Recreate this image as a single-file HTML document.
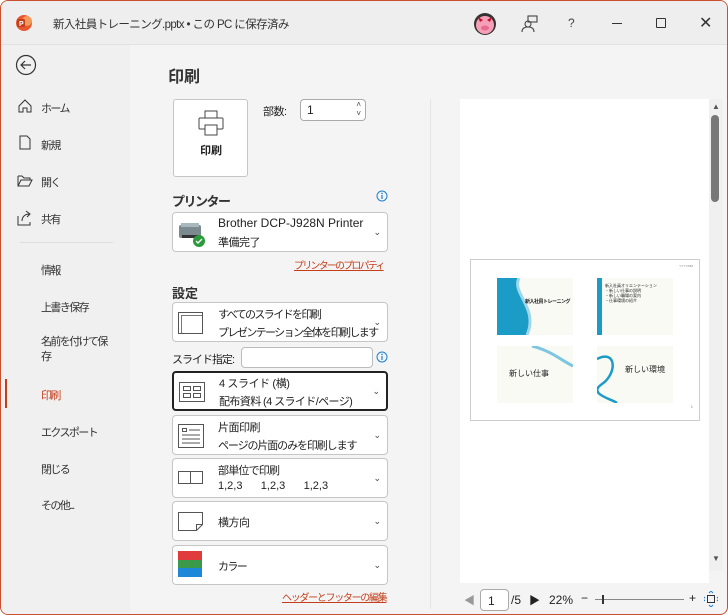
<!DOCTYPE html>
<html><head><meta charset="utf-8"><style>
*{box-sizing:border-box;margin:0;padding:0}
body{width:728px;height:615px;overflow:hidden;font-family:"Liberation Sans","Noto Sans CJK JP",sans-serif;font-size:12px;color:#222;background:#fff}
.win{position:absolute;left:0;top:0;width:728px;height:615px;border:1px solid #c8502e;border-radius:8px;overflow:hidden;background:#f4f4f4}
.title{position:absolute;left:0;top:0;width:728px;height:44px;background:#eeeeee;border-bottom:1px solid #e2e2e2}
.side{position:absolute;left:0;top:44px;width:129px;height:571px;background:#f0f0f0}
.a{position:absolute;white-space:nowrap}
.j{font-size:11px !important;letter-spacing:-1.6px}
.box{position:absolute;background:#fff;border:1px solid #c6c6c6;border-radius:4px}
.chev{position:absolute;right:6px;top:50%;margin-top:-5px;font-size:9px;color:#444}
.t1{position:absolute;left:45px;top:6px;font-size:12px;white-space:nowrap}
.t2{position:absolute;left:45px;top:24px;font-size:12px;white-space:nowrap}
.nav{position:absolute;left:40px;font-size:11px;color:#333;letter-spacing:-1.6px;white-space:nowrap}
</style></head><body><div class="win">
<div class="title">
 <svg class="a" style="left:14px;top:13px" width="18" height="18"><circle cx="9" cy="9" r="8" fill="#e8562e"/><circle cx="12" cy="7" r="5" fill="#f29a5a"/><rect x="2" y="5" width="8" height="8" rx="1.5" fill="#c43e1c"/><text x="4" y="12" font-size="7" fill="#fff" font-weight="bold" font-family="Liberation Sans">P</text></svg>
 <div class="a" style="left:52px;top:15px;font-size:11.5px;letter-spacing:-0.6px;color:#333">新入社員トレーニング.pptx • この PC に保存済み</div>
 <svg class="a" style="left:472px;top:11px" width="24" height="24"><circle cx="12" cy="12" r="11" fill="#333"/><circle cx="12" cy="13" r="9" fill="#f6a0b8"/><path d="M5 5 L10 8 L7 10Z M19 5 L14 8 L17 10Z" fill="#c0102a"/><ellipse cx="12" cy="16" rx="4" ry="2.5" fill="#e86a90"/></svg>
 <svg class="a" style="left:520px;top:14px" width="18" height="18" fill="none" stroke="#444" stroke-width="1.1"><rect x="7" y="1" width="9" height="6"/><circle cx="7" cy="9" r="3"/><path d="M1 17c0-4 3-5 6-5s6 1 6 5"/></svg>
 <div class="a" style="left:567px;top:15px;font-size:12px;color:#444">?</div>
 <div class="a" style="left:611px;top:22px;width:10px;height:1px;background:#333"></div>
 <div class="a" style="left:655px;top:17px;width:10px;height:10px;border:1px solid #333;border-radius:1px"></div>
 <div class="a" style="left:698px;top:12px;font-size:16px;color:#333">✕</div>
</div>
<div class="side">
 <svg class="a" style="left:14px;top:9px" width="22" height="22" fill="none" stroke="#333" stroke-width="1.2"><circle cx="11" cy="11" r="9.5"/><path d="M16 11H6M10 7l-4 4 4 4"/></svg>
 <svg class="a" style="left:17px;top:54px" width="14" height="14" fill="none" stroke="#333"><path d="M1 7L7 1l6 6v6H9V9H5v4H1z"/></svg>
 <div class="nav" style="top:55px">ホーム</div>
 <svg class="a" style="left:18px;top:90px" width="12" height="15" fill="none" stroke="#333"><path d="M1 1h7l3 3v10H1z"/></svg>
 <div class="nav" style="top:92px">新規</div>
 <svg class="a" style="left:16px;top:130px" width="16" height="12" fill="none" stroke="#333"><path d="M1 1h4l2 2h6v2M1 1v10h11l3-6H4l-3 6"/></svg>
 <div class="nav" style="top:129px">開く</div>
 <svg class="a" style="left:16px;top:165px" width="16" height="16" fill="none" stroke="#333"><path d="M1 6v9h12v-3M5 11c0-4 3-7 7-7M9 1l4 3-3 3"/></svg>
 <div class="nav" style="top:166px">共有</div>
 <div class="a" style="left:19px;top:197px;width:93px;height:1px;background:#ddd"></div>
 <div class="nav" style="top:217px">情報</div>
 <div class="nav" style="top:254px">上書き保存</div>
 <div class="nav" style="top:290px;line-height:15px">名前を付けて保<br>存</div>
 <div class="a" style="left:4px;top:334px;width:2px;height:29px;background:#c43e1c"></div>
 <div class="nav" style="top:342px;color:#c43e1c">印刷</div>
 <div class="nav" style="top:379px">エクスポート</div>
 <div class="nav" style="top:416px">閉じる</div>
 <div class="nav" style="top:452px">その他...</div>
</div>
<div class="a" style="left:167px;top:62px;font-size:16px;font-weight:bold;color:#333">印刷</div>
<div class="box" style="left:172px;top:98px;width:75px;height:78px;border-radius:3px">
 <svg class="a" style="left:24px;top:10px" width="26" height="26" fill="none" stroke="#444"><rect x="7" y="1" width="12" height="7"/><rect x="1" y="8" width="24" height="11" rx="1"/><rect x="7" y="15" width="12" height="10" fill="#fff"/></svg>
 <div class="a" style="left:26px;top:42px;font-size:11px;font-weight:bold">印刷</div>
</div>
<div class="a j" style="left:262px;top:102px;letter-spacing:-0.5px">部数:</div>
<div class="box" style="left:299px;top:98px;width:66px;height:22px;border-color:#aaa"><span class="a" style="left:6px;top:3px">1</span><span class="a" style="right:4px;top:0;font-size:8px;line-height:9px;color:#444">˄<br>˅</span></div>
<div class="a" style="left:171px;top:190px;font-size:13px;font-weight:bold;color:#333;letter-spacing:-1.5px">プリンター</div>
<svg class="a" style="left:375px;top:189px" width="12" height="12"><circle cx="6" cy="6" r="5" fill="none" stroke="#1e7fd0"/><rect x="5.4" y="5" width="1.2" height="4" fill="#1e7fd0"/><circle cx="6" cy="3.4" r=".8" fill="#1e7fd0"/></svg>
<div class="box" style="left:171px;top:211px;width:216px;height:40px">
 <svg class="a" style="left:4px;top:8px" width="30" height="28"><rect x="2" y="4" width="22" height="13" rx="2" fill="#7b8a8e"/><rect x="4" y="2" width="18" height="4" fill="#a9b8bc"/><rect x="5" y="14" width="16" height="3" fill="#333"/><circle cx="22" cy="20" r="6" fill="#2a9a3a"/><path d="M19 20l2 2 4-4" stroke="#fff" fill="none" stroke-width="1.4"/></svg>
 <div class="t1" style="top:3px">Brother DCP-J928N Printer</div><div class="t2 j" style="top:21px;letter-spacing:-0.5px">準備完了</div><span class="chev">⌄</span>
</div>
<div class="a" style="left:293px;top:256px;font-size:10px;letter-spacing:-1.8px;color:#c43e1c;text-decoration:underline">プリンターのプロパティ</div>
<div class="a" style="left:171px;top:282px;font-size:13px;font-weight:bold;color:#333">設定</div>
<div class="box" style="left:171px;top:301px;width:216px;height:40px">
 <div class="a" style="left:5px;top:9px;width:25px;height:22px;border:1px solid #555;box-shadow:inset 2px 2px 0 #fff,inset 3px 3px 0 #777"></div>
 <div class="t1 j" style="top:3px">すべてのスライドを印刷</div><div class="t2 j" style="top:21px">プレゼンテーション全体を印刷します</div><span class="chev">⌄</span></div>
<div class="a j" style="left:171px;top:350px;letter-spacing:-1px">スライド指定:</div>
<div class="box" style="left:240px;top:346px;width:132px;height:21px;border-color:#bbb"></div>
<svg class="a" style="left:375px;top:350px" width="12" height="12"><circle cx="6" cy="6" r="5" fill="none" stroke="#1e7fd0"/><rect x="5.4" y="5" width="1.2" height="4" fill="#1e7fd0"/><circle cx="6" cy="3.4" r=".8" fill="#1e7fd0"/></svg>
<div class="box" style="left:171px;top:370px;width:216px;height:40px;border:2px solid #222">
 <svg class="a" style="left:5px;top:9px" width="26" height="20" fill="none" stroke="#555"><rect x=".5" y=".5" width="25" height="19"/><rect x="4.5" y="4.5" width="7" height="4"/><rect x="14.5" y="4.5" width="7" height="4"/><rect x="4.5" y="11.5" width="7" height="4"/><rect x="14.5" y="11.5" width="7" height="4"/></svg>
 <div class="t1 j" style="top:2px;letter-spacing:-0.4px">4 スライド (横)</div><div class="t2 j" style="top:20px;letter-spacing:-0.6px">配布資料 (4 スライド/ページ)</div><span class="chev">⌄</span></div>
<div class="box" style="left:171px;top:414px;width:216px;height:40px">
 <svg class="a" style="left:5px;top:8px" width="26" height="24" fill="none" stroke="#555"><rect x=".5" y=".5" width="25" height="23"/><rect x="4.5" y="4.5" width="4" height="3"/><path d="M11 6h11M4 11h18M4 15h18M4 19h18"/></svg>
 <div class="t1 j" style="top:3px;letter-spacing:-0.5px">片面印刷</div><div class="t2 j" style="top:21px;letter-spacing:-1.1px">ページの片面のみを印刷します</div><span class="chev">⌄</span></div>
<div class="box" style="left:171px;top:457px;width:216px;height:40px">
 <svg class="a" style="left:5px;top:12px" width="26" height="14" fill="none" stroke="#555"><rect x=".5" y=".5" width="12" height="12"/><rect x="12.5" y=".5" width="12" height="12"/></svg>
 <div class="t1 j" style="top:3px;letter-spacing:-0.8px">部単位で印刷</div><div class="t2" style="top:21px;font-size:11px">1,2,3&nbsp;&nbsp;&nbsp;&nbsp;&nbsp;&nbsp;1,2,3&nbsp;&nbsp;&nbsp;&nbsp;&nbsp;&nbsp;1,2,3</div><span class="chev">⌄</span></div>
<div class="box" style="left:171px;top:500px;width:216px;height:40px">
 <svg class="a" style="left:5px;top:10px" width="26" height="20" fill="none" stroke="#555"><path d="M.5 .5h24v12l-6 6H.5z M24.5 12.5h-6v6"/></svg>
 <div class="t1 j" style="top:12px;letter-spacing:-0.5px">横方向</div><span class="chev">⌄</span></div>
<div class="box" style="left:171px;top:544px;width:216px;height:40px">
 <div class="a" style="left:5px;top:5px;width:24px;height:9px;background:#e03c3c"></div>
 <div class="a" style="left:5px;top:14px;width:24px;height:8px;background:#3a9a4a"></div>
 <div class="a" style="left:5px;top:22px;width:24px;height:9px;background:#1e88d8"></div>
 <div class="t1 j" style="top:12px">カラー</div><span class="chev">⌄</span></div>
<div class="a" style="left:281px;top:588px;font-size:10px;letter-spacing:-1.3px;color:#c43e1c;text-decoration:underline">ヘッダーとフッターの編集</div>
<div class="a" style="left:429px;top:98px;width:1px;height:510px;background:#e4e4e4"></div>
<div class="a" style="left:459px;top:98px;width:249px;height:484px;background:#fff"></div>
<div class="a" style="left:708px;top:98px;width:14px;height:472px;background:#f0f0f0"></div>
<div class="a" style="left:711px;top:101px;font-size:8px;color:#555">▲</div>
<div class="a" style="left:710px;top:114px;width:8px;height:87px;background:#777;border-radius:4px"></div>
<div class="a" style="left:711px;top:553px;font-size:8px;color:#555">▼</div>
<div class="a" style="left:469px;top:258px;width:230px;height:162px;border:1px solid #ccc;background:#fff">
 <div class="a" style="right:6px;top:4px;font-size:3px;color:#888">YYYY/MM</div>
 <div class="a" style="left:26px;top:18px;width:76px;height:57px;background:#fafaf5;overflow:hidden"><svg width="76" height="57"><path d="M0 0h22c-8 15 20 30 8 57H0z" fill="#1a9cc6"/><path d="M22 0c-8 15 20 30 8 57" stroke="#9fd6ea" stroke-width="3" fill="none"/></svg><div class="a" style="left:28px;top:20px;font-size:5px;font-weight:bold;letter-spacing:-.5px">新入社員トレーニング</div></div>
 <div class="a" style="left:126px;top:18px;width:76px;height:57px;background:#fafaf5"><div class="a" style="left:0;top:0;width:5px;height:57px;background:#1a9cc6"></div><div class="a" style="left:8px;top:5px;font-size:4px;line-height:5px">新入社員オリエンテーション<br>・新しい仕事の説明<br>・新しい職場の案内<br>・仕事環境の紹介</div></div>
 <div class="a" style="left:26px;top:86px;width:76px;height:57px;background:#fafaf5;overflow:hidden"><svg class="a" width="76" height="57"><path d="M35 0c20 5 30 15 41 20" stroke="#7cc6e0" stroke-width="3" fill="none"/></svg><div class="a" style="left:12px;top:22px;font-size:8px">新しい仕事</div></div>
 <div class="a" style="left:126px;top:86px;width:76px;height:57px;background:#fafaf5;overflow:hidden"><svg class="a" width="76" height="57"><path d="M0 13c20-10 20 15 5 25s10 15 15 19" stroke="#1a9cc6" stroke-width="2.5" fill="none"/></svg><div class="a" style="left:28px;top:18px;font-size:8px">新しい環境</div></div>
 <div class="a" style="right:6px;top:144px;font-size:4px;color:#888">1</div>
</div>
<div class="a" style="left:463px;top:591px;font-size:11px;color:#999">◀</div>
<div class="box" style="left:479px;top:588px;width:29px;height:22px;border-color:#aaa"><span class="a" style="left:7px;top:4px">1</span></div>
<div class="a" style="left:510px;top:592px">/5</div>
<div class="a" style="left:528px;top:591px;font-size:11px;color:#222">▶</div>
<div class="a" style="left:548px;top:592px">22%</div>
<div class="a" style="left:580px;top:590px">−</div>
<div class="a" style="left:594px;top:598px;width:89px;height:1px;background:#888"></div>
<div class="a" style="left:601px;top:594px;width:2px;height:9px;background:#333"></div>
<div class="a" style="left:688px;top:590px">+</div>
<svg class="a" style="left:703px;top:590px" width="14" height="16" fill="none" stroke="#1e7fd0"><rect x="3.5" y="4.5" width="7" height="7" stroke="#333"/><path d="M5 2l2-2 2 2M5 14l2 2 2-2M1 6L-1 8l2 2M13 6l2 2-2 2"/></svg>
</div></body></html>
